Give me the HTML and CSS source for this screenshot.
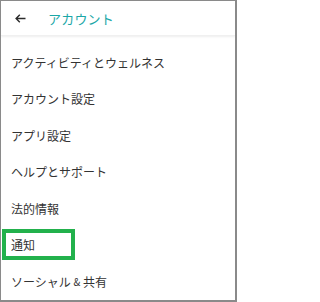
FILE: index.html
```html
<!DOCTYPE html>
<html lang="ja">
<head>
<meta charset="utf-8">
<link rel="stylesheet" href="styles.css">
</head>
<body>
<div class="frame">
  <header class="topbar">
    <span class="back">
      <svg width="11" height="9" viewBox="0 0 11 9"><path d="M10.5 4.5H1.2M4.8 0.8L1.1 4.5L4.8 8.2" fill="none" stroke="#2b2b2b" stroke-width="1.4"/></svg>
    </span>
    <span class="title">アカウント</span>
  </header>
  <ul class="menu">
    <li class="item">アクティビティとウェルネス</li>
    <li class="item">アカウント設定</li>
    <li class="item">アプリ設定</li>
    <li class="item">ヘルプとサポート</li>
    <li class="item">法的情報</li>
    <li class="item"><span class="hl">通知</span></li>
    <li class="item">ソーシャル <span class="amp">&amp;</span> 共有</li>
  </ul>
</div>
</body>
</html>
```
FILE: styles.css
```css
html, body {
  margin: 0;
  padding: 0;
  background: #fff;
}
.frame {
  width: 237px;
  height: 302px;
  box-sizing: border-box;
  border-style: solid;
  border-color: #8a8a8a;
  border-width: 1px 2px 2px 1px;
  font-family: "Noto Sans CJK JP", "Noto Sans", sans-serif;
  overflow: hidden;
}
.topbar {
  height: 34px;
  display: flex;
  align-items: center;
  box-shadow: 0 1px 2px rgba(0,0,0,0.07);
  border-bottom: 1px solid #f0f0f0;
}
.back {
  width: 47px;
  display: flex;
  justify-content: center;
  padding-right: 9px;
  box-sizing: border-box;
  margin-top: 1px;
}
.back svg { display: block; }
.title {
  color: #1ba7a7;
  font-size: 13px;
  letter-spacing: 0.2px;
  line-height: 1;
}
.menu {
  list-style: none;
  margin: 0;
  padding: 8px 0 0 0;
}
.item {
  height: 36.5px;
  display: flex;
  align-items: center;
  padding-left: 10px;
  font-size: 12px;
  color: #333;
  white-space: pre;
}
.amp {
  font-size: 10px;
}
.hl {
  display: flex;
  align-items: center;
  margin-left: -9px;
  padding-left: 5px;
  width: 60px;
  height: 23px;
  border: 4px solid #22b14c;
}
```
